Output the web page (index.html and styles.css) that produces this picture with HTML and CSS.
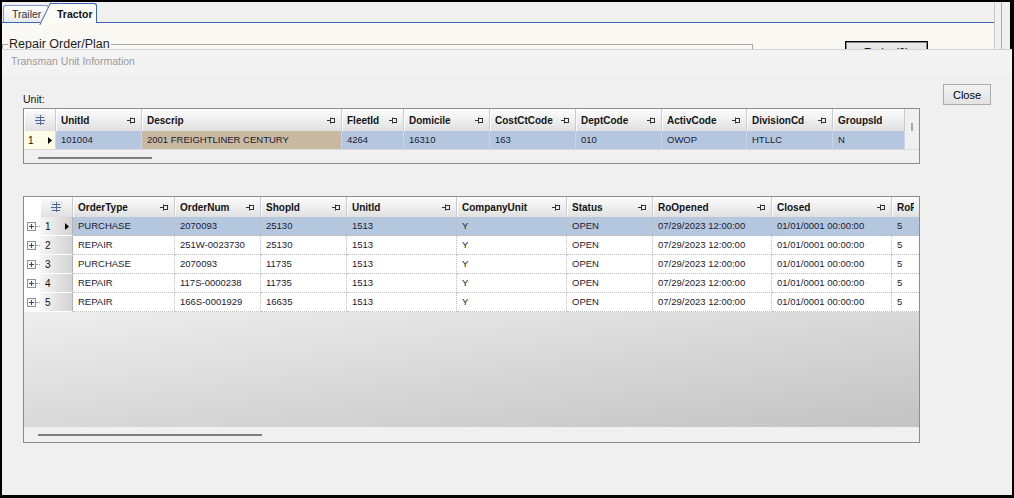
FILE: index.html
```html
<!DOCTYPE html>
<html>
<head>
<meta charset="utf-8">
<link rel="stylesheet" href="styles.css">
</head>
<body>
<div class="screen">
  <div class="bgwin">
    <div class="bgmain">
      <div class="tabs">
        <div class="tab tab-off">Trailer</div>
        <div class="tab tab-on">Tractor</div>
      </div>
      <div class="tabpage">
        <fieldset class="group"><legend>Repair Order/Plan</legend></fieldset>
        <div class="bgbtn">Tasks (0)</div>
      </div>
    </div>
    <div class="bgscroll"></div>
  </div>

  <div class="dialog">
    <div class="dtitle">Transman Unit Information</div>
    <div class="dbody">
      <div class="dmain">
        <div class="lbl">Unit:</div>

        <div class="grid g1">
          <div class="row hdr">
            <div class="hc corner"><svg class="chooser" width="12" height="12" viewBox="0 0 12 12"><rect x="0" y="0" width="12" height="12" fill="#e3e8f1"/><path d="M2 3.5H10M1 6.5H11M2 9.5H10M6.5 1V11" stroke="#56688c" stroke-width="1" fill="none"/></svg></div>
            <div class="hc"><span class="t">UnitId</span><svg class="pin" width="9" height="7" viewBox="0 0 9 7"><path d="M0 3.5H3M3.5 0.5V6.5" stroke="#333"/><rect x="3.5" y="1.5" width="4" height="4" fill="none" stroke="#333"/></svg></div>
            <div class="hc"><span class="t">Descrip</span><svg class="pin" width="9" height="7" viewBox="0 0 9 7"><path d="M0 3.5H3M3.5 0.5V6.5" stroke="#333"/><rect x="3.5" y="1.5" width="4" height="4" fill="none" stroke="#333"/></svg></div>
            <div class="hc"><span class="t">FleetId</span><svg class="pin" width="9" height="7" viewBox="0 0 9 7"><path d="M0 3.5H3M3.5 0.5V6.5" stroke="#333"/><rect x="3.5" y="1.5" width="4" height="4" fill="none" stroke="#333"/></svg></div>
            <div class="hc"><span class="t">Domicile</span><svg class="pin" width="9" height="7" viewBox="0 0 9 7"><path d="M0 3.5H3M3.5 0.5V6.5" stroke="#333"/><rect x="3.5" y="1.5" width="4" height="4" fill="none" stroke="#333"/></svg></div>
            <div class="hc"><span class="t">CostCtCode</span><svg class="pin" width="9" height="7" viewBox="0 0 9 7"><path d="M0 3.5H3M3.5 0.5V6.5" stroke="#333"/><rect x="3.5" y="1.5" width="4" height="4" fill="none" stroke="#333"/></svg></div>
            <div class="hc"><span class="t">DeptCode</span><svg class="pin" width="9" height="7" viewBox="0 0 9 7"><path d="M0 3.5H3M3.5 0.5V6.5" stroke="#333"/><rect x="3.5" y="1.5" width="4" height="4" fill="none" stroke="#333"/></svg></div>
            <div class="hc"><span class="t">ActivCode</span><svg class="pin" width="9" height="7" viewBox="0 0 9 7"><path d="M0 3.5H3M3.5 0.5V6.5" stroke="#333"/><rect x="3.5" y="1.5" width="4" height="4" fill="none" stroke="#333"/></svg></div>
            <div class="hc"><span class="t">DivisionCd</span><svg class="pin" width="9" height="7" viewBox="0 0 9 7"><path d="M0 3.5H3M3.5 0.5V6.5" stroke="#333"/><rect x="3.5" y="1.5" width="4" height="4" fill="none" stroke="#333"/></svg></div>
            <div class="hc"><span class="t">GroupsId</span></div>
            <div class="filler"><span class="tick"></span></div>
          </div>
          <div class="row data">
            <div class="rh1"><span>1</span><svg width="4" height="7" viewBox="0 0 4 7"><path d="M0 0L4 3.5L0 7Z" fill="#000"/></svg></div>
            <div class="dc">101004</div>
            <div class="dc active">2001 FREIGHTLINER CENTURY</div>
            <div class="dc">4264</div>
            <div class="dc">16310</div>
            <div class="dc">163</div>
            <div class="dc">010</div>
            <div class="dc">OWOP</div>
            <div class="dc">HTLLC</div>
            <div class="dc">N</div>
            <div class="filler"></div>
          </div>
          <div class="scroll"><div class="thumb t1"></div></div>
        </div>

        <div class="grid g2">
          <div class="row hdr">
            <div class="blank"></div>
            <div class="hc corner"><svg class="chooser" width="12" height="12" viewBox="0 0 12 12"><rect x="0" y="0" width="12" height="12" fill="#e3e8f1"/><path d="M2 3.5H10M1 6.5H11M2 9.5H10M6.5 1V11" stroke="#56688c" stroke-width="1" fill="none"/></svg></div>
            <div class="hc"><span class="t">OrderType</span><svg class="pin" width="9" height="7" viewBox="0 0 9 7"><path d="M0 3.5H3M3.5 0.5V6.5" stroke="#333"/><rect x="3.5" y="1.5" width="4" height="4" fill="none" stroke="#333"/></svg></div>
            <div class="hc"><span class="t">OrderNum</span><svg class="pin" width="9" height="7" viewBox="0 0 9 7"><path d="M0 3.5H3M3.5 0.5V6.5" stroke="#333"/><rect x="3.5" y="1.5" width="4" height="4" fill="none" stroke="#333"/></svg></div>
            <div class="hc"><span class="t">ShopId</span><svg class="pin" width="9" height="7" viewBox="0 0 9 7"><path d="M0 3.5H3M3.5 0.5V6.5" stroke="#333"/><rect x="3.5" y="1.5" width="4" height="4" fill="none" stroke="#333"/></svg></div>
            <div class="hc"><span class="t">UnitId</span><svg class="pin" width="9" height="7" viewBox="0 0 9 7"><path d="M0 3.5H3M3.5 0.5V6.5" stroke="#333"/><rect x="3.5" y="1.5" width="4" height="4" fill="none" stroke="#333"/></svg></div>
            <div class="hc"><span class="t">CompanyUnit</span><svg class="pin" width="9" height="7" viewBox="0 0 9 7"><path d="M0 3.5H3M3.5 0.5V6.5" stroke="#333"/><rect x="3.5" y="1.5" width="4" height="4" fill="none" stroke="#333"/></svg></div>
            <div class="hc"><span class="t">Status</span><svg class="pin" width="9" height="7" viewBox="0 0 9 7"><path d="M0 3.5H3M3.5 0.5V6.5" stroke="#333"/><rect x="3.5" y="1.5" width="4" height="4" fill="none" stroke="#333"/></svg></div>
            <div class="hc"><span class="t">RoOpened</span><svg class="pin" width="9" height="7" viewBox="0 0 9 7"><path d="M0 3.5H3M3.5 0.5V6.5" stroke="#333"/><rect x="3.5" y="1.5" width="4" height="4" fill="none" stroke="#333"/></svg></div>
            <div class="hc"><span class="t">Closed</span><svg class="pin" width="9" height="7" viewBox="0 0 9 7"><path d="M0 3.5H3M3.5 0.5V6.5" stroke="#333"/><rect x="3.5" y="1.5" width="4" height="4" fill="none" stroke="#333"/></svg></div>
            <div class="hc last"><span class="t">RoPriority</span></div>
          </div>

          <div class="row drow sel">
            <div class="exp"><svg width="9" height="9" viewBox="0 0 9 9"><rect x="0.5" y="0.5" width="8" height="8" fill="#f5f5f5" stroke="#939393"/><path d="M2 4.5H7M4.5 2V7" stroke="#2c4b7e"/></svg><span class="dots"></span></div>
            <div class="rh"><span class="n">1</span><svg width="4" height="7" viewBox="0 0 4 7"><path d="M0 0L4 3.5L0 7Z" fill="#000"/></svg></div>
            <div class="dc">PURCHASE</div><div class="dc">2070093</div><div class="dc">25130</div><div class="dc">1513</div><div class="dc">Y</div><div class="dc">OPEN</div><div class="dc">07/29/2023 12:00:00</div><div class="dc">01/01/0001 00:00:00</div><div class="dc last">5</div>
          </div>
          <div class="row drow">
            <div class="exp"><svg width="9" height="9" viewBox="0 0 9 9"><rect x="0.5" y="0.5" width="8" height="8" fill="#f5f5f5" stroke="#939393"/><path d="M2 4.5H7M4.5 2V7" stroke="#2c4b7e"/></svg><span class="dots"></span></div>
            <div class="rh"><span class="n">2</span></div>
            <div class="dc">REPAIR</div><div class="dc">251W-0023730</div><div class="dc">25130</div><div class="dc">1513</div><div class="dc">Y</div><div class="dc">OPEN</div><div class="dc">07/29/2023 12:00:00</div><div class="dc">01/01/0001 00:00:00</div><div class="dc last">5</div>
          </div>
          <div class="row drow">
            <div class="exp"><svg width="9" height="9" viewBox="0 0 9 9"><rect x="0.5" y="0.5" width="8" height="8" fill="#f5f5f5" stroke="#939393"/><path d="M2 4.5H7M4.5 2V7" stroke="#2c4b7e"/></svg><span class="dots"></span></div>
            <div class="rh"><span class="n">3</span></div>
            <div class="dc">PURCHASE</div><div class="dc">2070093</div><div class="dc">11735</div><div class="dc">1513</div><div class="dc">Y</div><div class="dc">OPEN</div><div class="dc">07/29/2023 12:00:00</div><div class="dc">01/01/0001 00:00:00</div><div class="dc last">5</div>
          </div>
          <div class="row drow">
            <div class="exp"><svg width="9" height="9" viewBox="0 0 9 9"><rect x="0.5" y="0.5" width="8" height="8" fill="#f5f5f5" stroke="#939393"/><path d="M2 4.5H7M4.5 2V7" stroke="#2c4b7e"/></svg><span class="dots"></span></div>
            <div class="rh"><span class="n">4</span></div>
            <div class="dc">REPAIR</div><div class="dc">117S-0000238</div><div class="dc">11735</div><div class="dc">1513</div><div class="dc">Y</div><div class="dc">OPEN</div><div class="dc">07/29/2023 12:00:00</div><div class="dc">01/01/0001 00:00:00</div><div class="dc last">5</div>
          </div>
          <div class="row drow">
            <div class="exp"><svg width="9" height="9" viewBox="0 0 9 9"><rect x="0.5" y="0.5" width="8" height="8" fill="#f5f5f5" stroke="#939393"/><path d="M2 4.5H7M4.5 2V7" stroke="#2c4b7e"/></svg><span class="dots"></span></div>
            <div class="rh"><span class="n">5</span></div>
            <div class="dc">REPAIR</div><div class="dc">166S-0001929</div><div class="dc">16635</div><div class="dc">1513</div><div class="dc">Y</div><div class="dc">OPEN</div><div class="dc">07/29/2023 12:00:00</div><div class="dc">01/01/0001 00:00:00</div><div class="dc last">5</div>
          </div>

          <div class="empty"></div>
          <div class="scroll"><div class="thumb t2"></div></div>
        </div>
      </div>
      <div class="dside"><button class="btn">Close</button></div>
    </div>
  </div>
</div>
</body>
</html>
```

FILE: styles.css
```css
* { box-sizing: border-box; }
html, body { margin: 0; padding: 0; }
body {
  width: 1014px;
  height: 498px;
  overflow: hidden;
  background: #000;
  font-family: "Liberation Sans", Arial, sans-serif;
  color: #111;
}

.screen {
  width: 1014px;
  height: 498px;
  border-style: solid;
  border-color: #000;
  border-width: 2px 2px 3px 2px;
  display: flex;
  flex-direction: column;
  background: #f0f0f0;
}

/* ---------- background window ---------- */
.bgwin {
  height: 47px;
  flex: none;
  display: flex;
  overflow: hidden;
}
.bgmain {
  width: 992px;
  flex: none;
  display: flex;
  flex-direction: column;
}
.bgscroll {
  flex: 1;
  background: linear-gradient(to right, #c9c9c9 0 1px, #f0f0f0 1px 7px, #a9a9a9 7px 8px, #f0f0f0 8px 16px, #000 16px);
}

.tabs {
  height: 21px;
  flex: none;
  display: flex;
  align-items: flex-end;
  padding-left: 1px;
  border-bottom: 1px solid #3d65b5;
  background: #f0f0f0;
}
.tab {
  font-size: 10.5px;
  line-height: 12px;
  white-space: nowrap;
}
.tab-off {
  width: 46px;
  height: 17px;
  border: 1px solid #7d97c6;
  border-bottom: none;
  border-radius: 3px 3px 0 0;
  background: linear-gradient(#fdfdfd, #e7ebf2);
  color: #333;
  padding: 2px 0 0 8px;
}
.tab-on {
  position: relative;
  z-index: 1;
  margin-left: 1px;
  margin-bottom: -1px;
  width: 47px;
  height: 20px;
  border: 1px solid #3d65b5;
  border-left: none;
  border-bottom: none;
  border-radius: 0 3px 0 0;
  background: #fbfbf8;
  font-weight: bold;
  color: #111;
  padding: 4px 0 0 7px;
}
.tab-on::before {
  content: "";
  position: absolute;
  left: 0;
  top: -1px;
  width: 10px;
  height: 21px;
  border-left: 1px solid #3d65b5;
  border-top: 1px solid #3d65b5;
  background: #fbfbf8;
  transform-origin: top left;
  transform: skewX(-26deg);
  z-index: -1;
}

.tabpage {
  flex: 1;
  background: #f9f8f3;
  display: flex;
  align-items: flex-start;
}
.group {
  margin: 14px 0 0 0;
  width: 751px;
  height: 40px;
  border: 1px solid #a8a8a8;
  padding: 0 0 0 5px;
  min-width: 0;
}
.group legend {
  padding: 0 1px;
  font-size: 12.5px;
  line-height: 14px;
  color: #1e1e1e;
}
.bgbtn {
  margin: 18px 0 0 92px;
  width: 83px;
  height: 24px;
  border: 1px solid #000;
  box-shadow: inset 0 0 0 1px #8a8a8a;
  background: #e8e8e8;
  font-size: 11px;
  line-height: 20px;
  text-align: center;
  color: #000;
}

/* ---------- dialog ---------- */
.dialog {
  flex: 1;
  display: flex;
  flex-direction: column;
  border-top: 1px solid #d2d2d2;
  border-radius: 4px 4px 0 0;
  background: #f0f0f0;
}
.dtitle {
  height: 25px;
  flex: none;
  padding-left: 9px;
  font-size: 10.5px;
  line-height: 23px;
  color: #9a9a9a;
  background: #f3f3f3;
}
.dbody {
  display: flex;
  padding-left: 21px;
}
.dmain {
  width: 897px;
  flex: none;
  padding-top: 18px;
}
.lbl {
  font-size: 10.5px;
  line-height: 13px;
  height: 13px;
  margin-bottom: 2px;
  color: #111;
}
.dside {
  margin-left: 23px;
  padding-top: 9px;
}
.btn {
  width: 48px;
  height: 21px;
  padding: 0;
  border: 1px solid #acacac;
  background: linear-gradient(#f2f2f2, #e2e2e2);
  font-family: "Liberation Sans", Arial, sans-serif;
  font-size: 11px;
  color: #000;
}

/* ---------- grids ---------- */
.grid {
  border: 1px solid #8c8c8c;
  background: #f0f0f0;
}
.row { display: grid; }

.hc {
  display: flex;
  align-items: center;
  padding: 0 5px 0 5px;
  background: linear-gradient(#fdfdfd, #e0e0e0);
  border-right: 1px solid #c3ccd7;
  box-shadow: inset 1px 0 #ffffff;
  font-size: 10px;
  font-weight: bold;
  color: #141414;
  white-space: nowrap;
  overflow: hidden;
}
.hc .t { flex: 1; overflow: hidden; }
.hc .pin { flex: none; }
.hc.corner { justify-content: center; padding: 0; }
.hc.last { border-right: none; }

.dc {
  padding-left: 5px;
  font-size: 9.5px;
  color: #1b1b30;
  white-space: nowrap;
  overflow: hidden;
}

/* grid 1 */
.g1 { margin-bottom: 32px; }
.g1 .row {
  grid-template-columns: 32px 86px 200px 62px 86px 86px 86px 85px 86px 72px 1fr;
}
.g1 .hdr { height: 22px; }
.g1 .data { height: 18px; }
.g1 .dc {
  line-height: 18px;
  background: #b5c7df;
  border-right: 1px solid #c9d5e6;
}
.g1 .dc.active { background: #c9b9a3; }
.filler {
  background: #f0f0f0;
  padding: 14px 0 0 6px;
}
.tick {
  display: block;
  width: 2px;
  height: 8px;
  background: #a9a9a9;
}
.g1 .data .filler { padding: 0; }
.rh1 {
  display: flex;
  align-items: center;
  justify-content: space-between;
  padding: 0 3px 0 4px;
  background: #fdfce6;
  font-size: 10px;
  border-right: 1px solid #d6d6d6;
}
.g1 .scroll {
  height: 14px;
  border-top: 1px solid #dadada;
  padding: 7px 0 0 14px;
}
.thumb {
  height: 2px;
  background: #7e7e7e;
}
.t1 { width: 114px; }
.t2 { width: 224px; }

/* grid 2 */
.g2 .row {
  grid-template-columns: 16px 33px 102px 86px 86px 110px 110px 86px 119px 120px 1fr;
}
.g2 .hdr { height: 20px; }
.g2 .blank { background: #fff; }
.g2 .drow { height: 19px; }
.exp {
  background: #fff;
  display: flex;
  align-items: center;
  padding-left: 3px;
}
.exp svg { flex: none; display: block; }
.dots {
  width: 4px;
  height: 0;
  border-top: 1px dotted #9a9a9a;
}
.rh {
  display: flex;
  align-items: center;
  justify-content: space-between;
  padding: 0 3px 0 5px;
  background: linear-gradient(to right, #f6f6f6, #d3d3d3);
  border-bottom: 1px solid #fff;
  border-right: 1px solid #b4b4b4;
  font-size: 10px;
  color: #111;
}
.g2 .dc {
  line-height: 18px;
  background: #fff;
  border-right: 1px dotted #bdbdbd;
  border-bottom: 1px dotted #bdbdbd;
}
.g2 .dc.last { border-right: none; }
.g2 .sel .dc { background: #b5c7df; }
.g2 .empty {
  height: 115px;
  background: linear-gradient(to bottom right, #eeeeee, #c3c3c3);
}
.g2 .scroll {
  height: 15px;
  padding: 7px 0 0 14px;
  background: #f0f0f0;
}
```
